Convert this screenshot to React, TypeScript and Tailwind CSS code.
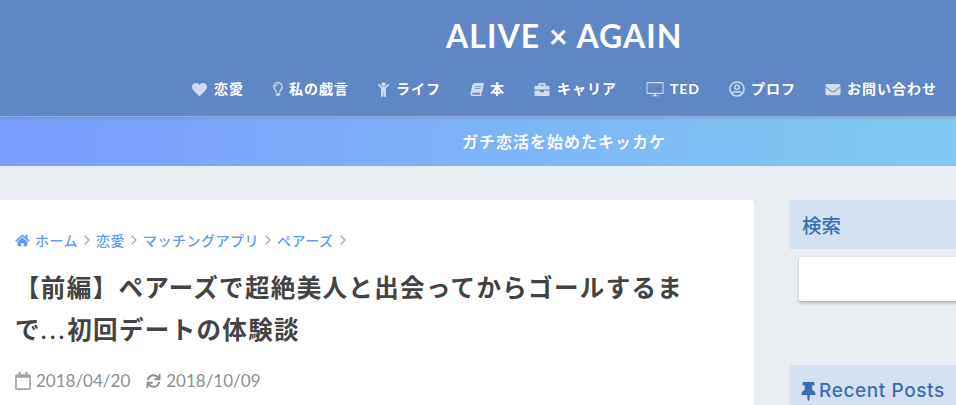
import type { ComponentType } from "react";
import { ChevronRight } from "lucide-react";
import {
  FaBook,
  FaBriefcase,
  FaChild,
  FaEnvelope,
  FaHeart,
  FaHome,
  FaRegCalendar,
  FaRegLightbulb,
  FaRegUserCircle,
  FaSync,
  FaThumbtack,
} from "react-icons/fa";

const jp = "font-['Noto_Sans_CJK_JP','Noto_Sans',sans-serif]";
// latin glyphs come from Lato, the rest falls through to the CJK face
const mixed = "font-['Lato','Noto_Sans_CJK_JP',sans-serif]";

// thin-framed monitor, the filled one from the pack reads too heavy
function Monitor({ className }: { className?: string }) {
  return (
    <svg viewBox="0 0 18 16" className={className} fill="currentColor">
      <path d="M1.5 1h15a1 1 0 0 1 1 1v10a1 1 0 0 1-1 1h-15a1 1 0 0 1-1-1V2a1 1 0 0 1 1-1zm0 1.2v9.6h15V2.2h-15z" fillRule="evenodd" />
      <path d="M8 13h2v1.4h2.5v.8h-7v-.8H8z" />
    </svg>
  );
}

const navItems: { label: string; icon: ComponentType<{ className?: string }>; iconClass: string; box: string }[] = [
  { label: "恋愛", icon: FaHeart, iconClass: "w-[15px] h-[15px]", box: "w-[22px]" },
  { label: "私の戯言", icon: FaRegLightbulb, iconClass: "w-[10px] h-[14px]", box: "w-[16px]" },
  { label: "ライフ", icon: FaChild, iconClass: "w-[11px] h-[15px]", box: "w-[18px]" },
  { label: "本", icon: FaBook, iconClass: "w-[14px] h-[13px] -skew-x-12", box: "w-[20px]" },
  { label: "キャリア", icon: FaBriefcase, iconClass: "w-[16px] h-[15px]", box: "w-[23px]" },
  { label: "TED", icon: Monitor, iconClass: "w-[18px] h-[16px]", box: "w-[24px]" },
  { label: "プロフ", icon: FaRegUserCircle, iconClass: "w-[16px] h-[16px]", box: "w-[22px]" },
  { label: "お問い合わせ", icon: FaEnvelope, iconClass: "w-[16px] h-[15px]", box: "w-[22px]" },
];

const crumbs = ["恋愛", "マッチングアプリ", "ペアーズ"];

function Chevron() {
  return <ChevronRight className="w-[16px] h-[16px] mx-[1px] text-[#aaaaaa]" strokeWidth={2} />;
}

function Header() {
  return (
    <header className="h-[117px] bg-[#5f86c5] border-b border-[#8fabd6] shadow-[0_1px_3px_rgba(0,0,0,0.15)] relative">
      <div className="h-[74px] pt-[16px] pl-[446px]">
        <div className="font-['Lato',sans-serif] text-[32px] leading-[40px] font-bold tracking-[1.05px] text-white whitespace-nowrap">
          ALIVE × AGAIN
        </div>
      </div>
      <nav className="flex justify-end gap-[29px] pr-[19px] h-[30px] items-center">
        {navItems.map((item) => {
          const Icon = item.icon;
          return (
            <div key={item.label} className="flex items-center">
              <span className={`${item.box} shrink-0`}>
                <Icon className={`${item.iconClass} text-white/70`} />
              </span>
              <span className={`${mixed} text-[14px] leading-[20px] font-bold tracking-[1px] text-white whitespace-nowrap`}>
                {item.label}
              </span>
            </div>
          );
        })}
      </nav>
    </header>
  );
}

function Notice() {
  return (
    <div className="h-[49px] bg-gradient-to-r from-[#7a9cff] to-[#7fcaf0] flex items-center justify-center pb-[2px] pl-[172px]">
      <span className={`${jp} text-[16px] font-bold tracking-[1px] text-white/95 whitespace-nowrap`}>
        ガチ恋活を始めたキッカケ
      </span>
    </div>
  );
}

function Article() {
  return (
    <main className="w-[754px] shrink-0 bg-white rounded-r-[4px] h-[300px] pt-[30px] pl-[15px]">
      <div className="flex items-center h-[20px] text-[#5f9bf8]">
        <FaHome className="w-[15px] h-[13px] mr-[5px]" />
        <span className={`${jp} text-[14px] font-medium tracking-[0.5px] whitespace-nowrap`}>ホーム</span>
        <Chevron />
        {crumbs.map((c) => (
          <span key={c} className="flex items-center">
            <span className={`${jp} text-[14px] font-medium tracking-[0.5px] whitespace-nowrap`}>{c}</span>
            <Chevron />
          </span>
        ))}
      </div>
      <h1 className={`${mixed} mt-[17px] w-[680px] text-[24.5px] leading-[42px] font-semibold tracking-[1.35px] text-[#434343]`}>
        <div className="whitespace-nowrap">【前編】ペアーズで超絶美人と出会ってからゴールするま</div>
        <div className="flex">
          <span>で</span>
          <span className="tracking-[3px]">...</span>
          <span>初回デートの体験談</span>
        </div>
      </h1>
      <div className="flex items-center mt-[17px] text-[#8f8f8f] text-[17px] font-['Lato',sans-serif]">
        <FaRegCalendar className="w-[16px] h-[18px] mr-[5px] text-[#a5a5a5]" />
        <span>2018/04/20</span>
        <FaSync className="w-[15px] h-[14px] ml-[16px] mr-[5px]" />
        <span>2018/10/09</span>
      </div>
    </main>
  );
}

function Sidebar() {
  return (
    <aside className="ml-[35px] w-[300px] shrink-0">
      <h2 className={`${jp} h-[49px] bg-[#d4e1f3] pl-[13px] flex items-center text-[19.5px] font-medium text-[#3a6db5]`}>
        検索
      </h2>
      <div className="mt-[8px] ml-[10px] h-[44px] bg-white rounded-[2px] shadow-[0_2px_3px_rgba(0,0,0,0.25)]" />
      <h2 className="mt-[64px] h-[49px] bg-[#d4e1f3] pl-[12px] pt-[4px] flex items-center text-[19px] font-medium text-[#3a6db5] font-['Inter',sans-serif] tracking-[0.6px]">
        <FaThumbtack className="w-[15px] h-[19px] mr-[3px]" />
        Recent Posts
      </h2>
    </aside>
  );
}

export default function App() {
  return (
    <div className="w-[956px] h-[405px] overflow-hidden bg-[#e9edf2]">
      <Header />
      <Notice />
      <div className="flex pt-[34px]">
        <Article />
        <Sidebar />
      </div>
    </div>
  );
}
